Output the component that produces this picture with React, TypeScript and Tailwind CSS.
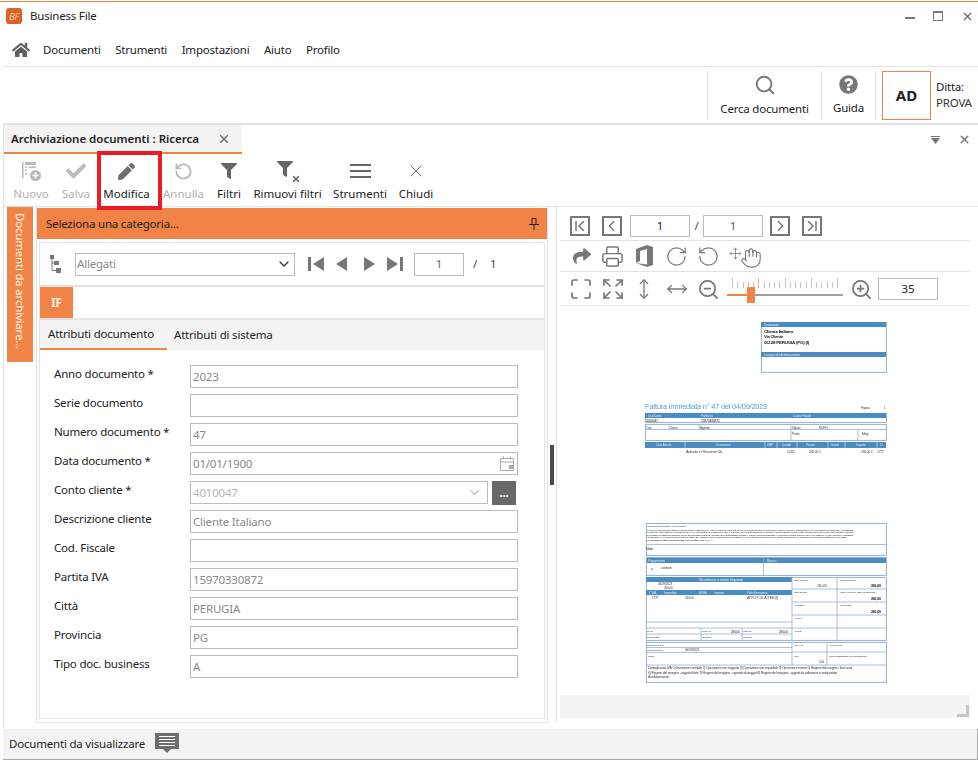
import { useState } from "react";
import { ChevronDown, Expand, Hand, Maximize, Move, MoveHorizontal, MoveVertical, Printer, RotateCcw, RotateCw, Search, X, ZoomIn, ZoomOut } from "lucide-react";
import { FaCheck, FaFilter, FaHome, FaPen, FaQuestionCircle, FaShare } from "react-icons/fa";

const font = "font-['Noto_Sans','Liberation_Sans',sans-serif]";

const fields = [
  { label: "Anno documento *", value: "2023" },
  { label: "Serie documento", value: "" },
  { label: "Numero documento *", value: "47" },
  { label: "Data documento *", value: "01/01/1900", kind: "date" },
  { label: "Conto cliente *", value: "4010047", kind: "combo" },
  { label: "Descrizione cliente", value: "Cliente Italiano" },
  { label: "Cod. Fiscale", value: "" },
  { label: "Partita IVA", value: "15970330872" },
  { label: "Città", value: "PERUGIA" },
  { label: "Provincia", value: "PG" },
  { label: "Tipo doc. business", value: "A" },
];

const line = "#8fb0d6";
const onBlue = "#d8e6f2";

const Blue = ({ x, y, w, h }: { x: number; y: number; w: number; h: number }) => <rect x={x} y={y} width={w} height={h} fill="#4a8bc2" />;
const Box = ({ x, y, w, h }: { x: number; y: number; w: number; h: number }) => <rect x={x + 0.4} y={y + 0.4} width={w} height={h} fill="none" stroke={line} strokeWidth="1" />;
const T = ({ x, y, s = 3.2, c = "#444", w, b, children }: { x: number; y: number; s?: number; c?: string; w?: number; b?: boolean; children: string }) => (
  <text x={x} y={y} fontSize={s} fill={c} fontWeight={b ? 700 : 400} textLength={w} lengthAdjust={w ? "spacingAndGlyphs" : undefined} fontFamily="Liberation Sans, sans-serif">{children}</text>
);

// anteprima della fattura
const DocPreview = () => (
  <svg viewBox="560 310 410 385" className="w-[410px] h-[385px] block mt-[4px] blur-[0.3px]">
    <Box x={761} y={322} w={125} h={50} />
    <Blue x={761} y={322} w={125} h={5} />
    <Blue x={761} y={352} w={125} h={5} />
    <T x={764} y={326} c={onBlue}>Destinatario</T>
    <T x={764} y={332.5} s={3.6} c="#111" b w={29}>Cliente Italiano</T>
    <T x={764} y={338} s={3.6} c="#111" b w={19}>Via Cliente</T>
    <T x={764} y={343.5} s={3.6} c="#222" b w={45}>06128 PERUGIA (PG) (I)</T>
    <T x={764} y={356} c={onBlue} w={36}>Luogo di destinazione</T>

    <T x={645} y={409} s={7} c="#5b9bd0" w={122}>Fattura immediata n° 47 del 04/09/2023</T>
    <T x={861} y={409} s={3}>Pagina:</T>
    <T x={884} y={409} s={3}>1</T>
    <Box x={645} y={413} w={241} h={9} />
    <Blue x={645} y={413} w={241} h={5} />
    <T x={648} y={417} c={onBlue}>Cod.Conto</T>
    <T x={701} y={417} c={onBlue}>Partita Iva</T>
    <T x={793} y={417} c={onBlue}>Codice Fiscale</T>
    <T x={646} y={421.5} s={3.4} c="#222">4010047</T>
    <T x={701} y={421.5} s={3.4} c="#222">15970330872</T>
    <Box x={645} y={424} w={241} h={16} />
    <path d="M645 429.500H886M791 424V440M699 424V429.500M669 424V429.500M858 429.500V440" stroke={line} strokeWidth="0.8" />
    <T x={646} y={428.5} s={3.4}>Cat.:</T>
    <T x={670} y={428.5} s={3.4}>Zona:</T>
    <T x={700} y={428.5} s={3.4}>Agente:</T>
    <T x={792} y={428.5} s={3.4}>Valuta:</T>
    <T x={819} y={428.5} s={3.4}>EURO</T>
    <T x={792} y={434.5} s={3.4}>Porto:</T>
    <T x={862} y={434.5} s={3.4}>Mag.:</T>
    <Blue x={645} y={442} w={241} h={6} />
    <path d="M685 442V448M765 442V448M777 442V448M797 442V448M828 442V448M845 442V448M877 442V448" stroke="#dce8f3" strokeWidth="0.6" />
    <T x={656} y={446.3} c={onBlue}>Cod. Articolo</T>
    <T x={716} y={446.3} c={onBlue}>Descrizione</T>
    <T x={767} y={446.3} s={2.8} c={onBlue}>UM/P</T>
    <T x={782} y={446.3} s={2.8} c={onBlue}>Quantità</T>
    <T x={806} y={446.3} c={onBlue}>Prezzo</T>
    <T x={831} y={446.3} c={onBlue}>Sconti</T>
    <T x={856} y={446.3} c={onBlue}>Importo</T>
    <T x={880} y={446.3} c={onBlue}>Ci</T>
    <T x={686} y={453} s={3.4} w={37}>Articolo in Reverse Ch.</T>
    <T x={787} y={453} s={3.4}>1,000</T>
    <T x={809} y={453} s={3.4}>260,00 €</T>
    <T x={861} y={453} s={3.4}>260,00 €</T>
    <T x={877} y={453} s={3.4}>1777</T>

    <Box x={646} y={523} w={240} h={32} />
    <path d="M646 544.500H886" stroke={line} strokeWidth="0.8" />
    <T x={647} y={527} s={2} w={40}>CONDIZIONI GENERALI DI VENDITA</T>
    <T x={647} y={530.5} s={2} w={206}>I prezzi applicati, salvo espressa pattuizione, sono quelli vigenti al momento della consegna della merce ordinata e le condizioni indicate in fattura</T>
    <T x={647} y={533} s={2} w={206}>Il cliente accetta le condizioni e le modalità di pagamento indicate; le contestazioni vanno presentate entro otto giorni dal ricevimento della merce</T>
    <T x={647} y={535.5} s={2} w={206}>in caso di ritardo sono dovuti gli interessi di mora previsti dalla legge; il foro competente è quello della sede del venditore e la merce viaggia</T>
    <T x={647} y={538} s={2} w={200}>a rischio e pericolo del committente anche se resa franco destino; eventuali reclami non sospendono il pagamento delle fatture emesse</T>
    <T x={647} y={540.5} s={2} w={65}>corrispettivi indicati al netto di IVA</T>
    <T x={646} y={549.5} s={3.6} c="#222">Note</T>

    <Blue x={646} y={557} w={240} h={6} />
    <Box x={646} y={557} w={240} h={18} />
    <path d="M763.500 557V575" stroke={line} strokeWidth="0.8" />
    <T x={648} y={561.5} s={3.6} c={onBlue}>Pagamento</T>
    <T x={767} y={561.5} s={3.6} c={onBlue}>Banca</T>
    <T x={651} y={570} s={3.4}>a</T>
    <T x={661} y={569} s={3.4}>contanti</T>

    <Box x={646} y={577} w={240} h={63} />
    <Blue x={646} y={577} w={146} h={5} />
    <T x={699} y={580.8} c={onBlue} w={44}>Scadenze e totale imposte</T>
    <T x={658} y={584.5} s={3.2}>04/09/2023</T>
    <T x={664} y={588.5} s={3.2}>260,00</T>
    <Blue x={646} y={590} w={146} h={5} />
    <T x={649} y={593.8} c={onBlue}>C.IVA</T>
    <T x={664} y={593.8} c={onBlue}>Imponibile</T>
    <T x={699} y={593.8} c={onBlue}>Al.IVA</T>
    <T x={714} y={593.8} c={onBlue}>Imposta</T>
    <T x={747} y={593.8} c={onBlue}>Titolo Esenzione</T>
    <T x={652} y={598.5} s={3.2}>1777</T>
    <T x={685} y={598.5} s={3.2}>260,00</T>
    <T x={747} y={598.5} s={3.2} w={31}>ART.17 C6. A-TER (I)</T>
    <path d="M792 577V640M837 577V640M792 589H886M792 602H886M792 615H886M792 628H886M646 622H792M646 628H792M646 634H792M701 628V640M742 628V640" stroke={line} strokeWidth="0.8" fill="none" />
    <T x={794} y={580.5} s={2.4}>Totale imponibile</T>
    <T x={817} y={587} s={3.6}>260,00</T>
    <T x={840} y={580.5} s={2.4}>Totale documento</T>
    <T x={871} y={587} s={3.6} c="#111" b>260,00</T>
    <T x={794} y={593} s={2.4}>Totale imposta</T>
    <T x={840} y={593} s={2.4} w={35}>Tot. Merce prima sconti</T>
    <T x={871} y={600} s={3.6} c="#111" b>260,00</T>
    <T x={794} y={606} s={2.4}>Altri Tot.Imp.</T>
    <T x={840} y={606} s={2.4}>Tot.a Pagare</T>
    <T x={871} y={612.5} s={3.6} c="#111" b>260,00</T>
    <T x={794} y={619} s={2.4}>Abbuoni</T>
    <T x={794} y={632} s={2.4}>Acconto</T>
    <T x={647} y={631.5} s={2.4}>Sc. Inc.</T>
    <T x={702} y={631.5} s={2.4}>Merce Inc.</T>
    <T x={731} y={632.5} s={3.2} c="#222">260,00</T>
    <T x={743} y={631.5} s={2.4}>Rates Inc.</T>
    <T x={779} y={632.5} s={3.2} c="#222">260,00</T>
    <T x={647} y={637.5} s={2.4}>Bolli/Omaggio</T>
    <T x={702} y={637.5} s={2.4}>Rimborso</T>
    <T x={743} y={637.5} s={2.4}>Spedizioni</T>

    <Box x={646} y={642} w={240} h={40} />
    <path d="M646 647.500H792M646 652.500H792M792 652H886M792 642V665M827 642V665M646 665H886" stroke={line} strokeWidth="0.8" />
    <T x={647} y={645.8} s={2.4}>Trasporto a cura di</T>
    <T x={647} y={651} s={2.4}>Data esportazione</T>
    <T x={685} y={651} s={3.2}>04/09/2023</T>
    <T x={647} y={656.5} s={2.4}>Allegato</T>
    <T x={794} y={645.8} s={2.4}>Cauz.Acc.</T>
    <T x={829} y={645.8} s={2.4}>Area ad esclus.</T>
    <T x={794} y={656.5} s={2.4}>Peso</T>
    <T x={829} y={656.5} s={2.4} w={38}>Firma destinatario per accettazione</T>
    <T x={819} y={663} s={3}>5,00</T>
    <T x={648} y={669} s={2.8} w={204}>Dettaglio esito IVA: 1) Inversione contabile  2) Operazione non soggetta  3) Operazione non imponibile  4) Operazione esente  5) Regime del margine - beni usati</T>
    <T x={648} y={673.5} s={2.8} w={189}>6) Regime del margine - oggetti d'arte  7) Regime del margine - agenzie di viaggio  8) Regime del margine - oggetti da collezione e antiquariato</T>
    <T x={648} y={678} s={2.8} w={21}>Autofatturazione</T>
  </svg>
);

const ToolBtn = ({ label, disabled, width, children }: { label: string; disabled?: boolean; width: string; children: React.ReactNode }) => (
  <div className={`flex flex-col items-center ${width}`}>
    <div className="h-[30px] flex items-center justify-center">{children}</div>
    <span className={`leading-[16px] whitespace-nowrap tracking-normal ${disabled ? "text-[#b0b0b0]" : "text-[#222]"}`}>{label}</span>
  </div>
);

const NavBox = ({ children }: { children: React.ReactNode }) => (
  <div className="w-5 h-5 border-2 border-[#777] flex items-center justify-center">{children}</div>
);

const RibbonDivider = () => <div className="w-px h-[48px] bg-[#e2e2e2]" />;

export default function App() {
  const [zoom] = useState(35);
  return (
    <div className={`relative w-[978px] h-[762px] bg-white overflow-hidden text-[11.500px] leading-[16px] tracking-[-0.2px] text-[#222] ${font}`}>
      <div className="h-px mt-px bg-[#ef8444]" />
      {/* barra titolo */}
      <div className="h-[30px] pb-[2px] flex items-center pl-[6px] pr-[4px]">
        <div className="w-4 h-4 rounded-[3px] bg-[#d9642a] flex items-center justify-center text-[9px] italic text-[#f6c9a8] leading-none">BF</div>
        <span className="ml-2">Business File</span>
        <div className="ml-auto flex items-center gap-[18px] text-[#6b6b6b]">
          <div className="w-[10px] h-[2px] bg-[#777] mt-[3px]" />
          <div className="w-[10px] h-[10px] border border-[#777] border-t-2" />
          <X size={13} strokeWidth={2.4} />
        </div>
      </div>
      {/* menu */}
      <div className="h-[33px] ml-[3px] pt-[1px] flex items-center border-b border-[#e2e2e2] box-content">
        <FaHome size={18} className="ml-[9px] text-[#5f5f5f]" />
        <div className="ml-[13px] flex gap-[14.500px]">
          <span>Documenti</span>
          <span>Strumenti</span>
          <span>Impostazioni</span>
          <span>Aiuto</span>
          <span>Profilo</span>
        </div>
      </div>
      {/* ribbon destro */}
      <div className="h-[56px] flex justify-end items-center pr-[2px] border-b-2 border-[#e2e2e2] box-content ml-[3px]">
        <RibbonDivider />
        <div className="w-[113px] flex flex-col items-center">
          <Search size={22} strokeWidth={2} className="text-[#777] mb-[5px]" />
          <span>Cerca documenti</span>
        </div>
        <RibbonDivider />
        <div className="w-[53px] flex flex-col items-center">
          <FaQuestionCircle size={19} className="text-[#777] mb-[6px]" />
          <span>Guida</span>
        </div>
        <RibbonDivider />
        <div className="ml-[6px] w-[49px] h-[49px] border border-[#ef8444] flex items-center justify-center font-bold text-[15px] tracking-normal">AD</div>
        <div className="w-[40px] ml-[5px]">
          <div>Ditta:</div>
          <div className="text-[#333]">PROVA</div>
        </div>
      </div>

      {/* area documento */}
      <div className="ml-[3px] h-[603px] border-l border-[#e2e2e2] flex flex-col">
        <div className="h-[29px] flex items-center pr-[7px]">
          <div className="w-[238px] h-[29px] bg-[#f3f3f3] border-b-2 border-[#ef8444] flex items-center pl-[7px] pr-[11px] justify-between">
            <span className="font-semibold whitespace-nowrap tracking-normal">Archiviazione documenti : Ricerca</span>
            <X size={14} strokeWidth={2} className="text-[#666]" />
          </div>
          <div className="ml-auto flex items-center gap-[18px] text-[#777]">
            <svg width="9" height="8" viewBox="0 0 9 8"><path d="M0 0H9V1H0ZM0 2H9L4.500 8Z" fill="#777" /></svg>
            <X size={13} strokeWidth={2.6} />
          </div>
        </div>
        {/* toolbar */}
        <div className="h-[52px] flex items-start pl-[9px] gap-[13px] pt-[2px]">
          <ToolBtn label="Nuovo" disabled width="w-[36px]">
            <svg width="22" height="22" viewBox="0 0 22 22">
              <path d="M2 2H3.500V18H2ZM5 2H16V5H5ZM5 6.500H7V8H5ZM5 9.500H7V11H5ZM5 13H7V14.500H5ZM8.500 6.500H16V8H8.500Z" fill="#b9b9b9" />
              <circle cx="15.500" cy="15.500" r="5.500" fill="#b9b9b9" />
              <path d="M15.500 12.500V18.500M12.500 15.500H18.500" stroke="#fff" strokeWidth="1.500" />
            </svg>
          </ToolBtn>
          <ToolBtn label="Salva" disabled width="w-[28px]"><FaCheck size={20} className="text-[#bcbcbc]" /></ToolBtn>
          <ToolBtn label="Modifica" width="w-[47px]"><FaPen size={17} className="text-[#6e6e6e]" /></ToolBtn>
          <ToolBtn label="Annulla" disabled width="w-[41px]"><RotateCcw size={19} strokeWidth={2.4} className="text-[#bcbcbc]" /></ToolBtn>
          <ToolBtn label="Filtri" width="w-[24px]"><FaFilter size={16} className="text-[#666]" /></ToolBtn>
          <ToolBtn label="Rimuovi filtri" width="w-[67px]">
            <div className="relative w-[22px] h-[20px]">
              <FaFilter size={16} className="text-[#666]" />
              <X size={10} strokeWidth={3.5} className="absolute right-[-2px] bottom-[-3px] text-[#666]" />
            </div>
          </ToolBtn>
          <ToolBtn label="Strumenti" width="w-[52px]">
            <div className="flex flex-col gap-[4px]">
              <div className="w-[21px] h-[2px] bg-[#666]" />
              <div className="w-[21px] h-[2px] bg-[#666]" />
              <div className="w-[21px] h-[2px] bg-[#666]" />
            </div>
          </ToolBtn>
          <ToolBtn label="Chiudi" width="w-[34px]"><X size={20} strokeWidth={1} className="text-[#555]" /></ToolBtn>
        </div>

        {/* corpo */}
        <div className="flex h-[522px] border-t border-[#e2e2e2]">
          <div className="w-[32px] pl-[3px] shrink-0">
            <div className="w-[26px] h-[155px] bg-[#f08345] text-[#fff3ea] [writing-mode:vertical-rl] pt-[6px] leading-[26px] whitespace-nowrap">
              Documenti da archiviare...
            </div>
          </div>
          {/* colonna sinistra */}
          <div className="w-[512px] h-[516px] shrink-0 border-l border-r border-b border-[#e2e2e2] flex flex-col">
            <div className="h-[31px] mt-px bg-[#f08345] flex items-center justify-between pl-[9px] pr-[8px] text-[#1f1f1f]">
              <span>Seleziona una categoria...</span>
              <svg width="10" height="12" viewBox="0 0 10 12"><path d="M3 .5H7V6.500H3ZM0 6.500H10M5 6.500V12" fill="none" stroke="#222" /></svg>
            </div>
            <div className="mx-[2px] mt-[3px] flex-1 mb-[3px] border border-[#e2e2e2] flex flex-col">
              <div className="h-[44px] border-b-2 border-[#e2e2e2] flex items-center">
                <svg width="12" height="18" viewBox="0 0 12 18" className="ml-[10px]">
                  <path d="M0 0H4V4H0ZM4 6H9V10H4ZM6 13H11V18H6Z" fill="#777" />
                  <path d="M2 4V15.500H6M2 8H4" fill="none" stroke="#777" />
                </svg>
                <div className="ml-[13px] w-[220px] h-[23px] border border-[#bbb] flex items-center justify-between pl-[1px] pr-[2px] text-[#888]">
                  <span>Allegati</span>
                  <ChevronDown size={16} strokeWidth={2} className="text-[#333]" />
                </div>
                <div className="ml-[13px] flex items-center gap-[12px]">
                  <svg width="16" height="14" viewBox="0 0 16 14"><path d="M0 0H3V14H0ZM16 0V14L5 7Z" fill="#777" /></svg>
                  <svg width="11" height="14" viewBox="0 0 11 14"><path d="M11 0V14L0 7Z" fill="#777" /></svg>
                  <svg width="11" height="14" viewBox="0 0 11 14" className="ml-[5px]"><path d="M0 0V14L11 7Z" fill="#777" /></svg>
                  <svg width="16" height="14" viewBox="0 0 16 14"><path d="M16 0H13V14H16ZM0 0V14L11 7Z" fill="#777" /></svg>
                </div>
                <div className="ml-[11px] w-[50px] h-[23px] border border-[#bbb] flex items-center justify-center text-[#666]">1</div>
                <span className="ml-[9px] text-[#444]">/</span>
                <span className="ml-[13px] text-[#444]">1</span>
              </div>
              <div className="h-[33px] border-b-2 border-[#e2e2e2]">
                <div className="w-[33px] h-[31px] bg-[#f08345] flex items-center justify-center font-bold text-[#fff3ea]">IF</div>
              </div>
              <div className="h-[30px] bg-[#f3f3f3] flex items-stretch">
                <div className="w-[127px] border-b-2 border-[#ef8444] pl-[8px] flex items-center">Attributi documento</div>
                <div className="pl-[7px] flex items-center">Attributi di sistema</div>
              </div>
              <div className="flex flex-col gap-[6px] pt-[15px] pl-[14px]">
                {fields.map((f) => (
                  <div key={f.label} className="flex items-start h-[23px]">
                    <span className="w-[136px] pt-[1px] text-[#222]">{f.label}</span>
                    {f.kind === "combo" ? (
                      <div className="flex gap-[4px]">
                        <div className="w-[298px] h-[23px] border border-[#bbb] flex items-center justify-between px-[2px] text-[#b5b5b5]">
                          <span>{f.value}</span>
                          <ChevronDown size={15} strokeWidth={2} className="text-[#bbb] mr-[3px]" />
                        </div>
                        <div className="w-6 h-6 bg-[#696969] text-white flex items-center justify-center font-bold leading-none">...</div>
                      </div>
                    ) : (
                      <div className="w-[328px] h-[23px] border border-[#bbb] flex items-center justify-between px-[2px] text-[#888]">
                        <span>{f.value}</span>
                        {f.kind === "date" && (
                          <svg width="14" height="15" viewBox="0 0 14 15" className="mr-[1px]">
                            <path d="M.5 2.500H13.500V14.500H.5ZM.5 6H13.500M3.500 .5V3M10.500 .5V3" fill="none" stroke="#aaa" />
                            <rect x="9" y="9" width="4" height="4" fill="#aaa" />
                          </svg>
                        )}
                      </div>
                    )}
                  </div>
                ))}
              </div>
            </div>
          </div>
          {/* splitter */}
          <div className="w-[8px] shrink-0 flex justify-center pt-[238px]">
            <div className="w-1 h-10 bg-[#4a4a4a]" />
          </div>
          {/* colonna destra */}
          <div className="w-[416px] h-[516px] border-l border-[#e2e2e2] pl-[3px]">
            <div className="h-[34px] pt-[4px] border-b border-[#e2e2e2] flex items-center pl-[10px] text-[#222] w-[410px]">
              <NavBox>
                <svg width="10" height="10" viewBox="0 0 10 10"><path d="M1 0V10M9 0L4 5L9 10" fill="none" stroke="#777" strokeWidth="1.500" /></svg>
              </NavBox>
              <div className="ml-[12px]">
                <NavBox>
                  <svg width="8" height="10" viewBox="0 0 8 10"><path d="M6 0L1.500 5L6 10" fill="none" stroke="#777" strokeWidth="1.500" /></svg>
                </NavBox>
              </div>
              <div className="ml-[8px] w-[60px] h-[22px] border border-[#bbb] flex items-center justify-center">1</div>
              <span className="w-[13px] text-center text-[#444]">/</span>
              <div className="w-[60px] h-[22px] border border-[#bbb] flex items-center justify-center text-[#555]">1</div>
              <div className="ml-[7px]">
                <NavBox>
                  <svg width="8" height="10" viewBox="0 0 8 10"><path d="M2 0L6.500 5L2 10" fill="none" stroke="#777" strokeWidth="1.500" /></svg>
                </NavBox>
              </div>
              <div className="ml-[12px]">
                <NavBox>
                  <svg width="10" height="10" viewBox="0 0 10 10"><path d="M9 0V10M1 0L6 5L1 10" fill="none" stroke="#777" strokeWidth="1.500" /></svg>
                </NavBox>
              </div>
            </div>
            <div className="h-[31px] border-b border-[#e2e2e2] flex items-center pl-[12px] w-[410px] text-[#777]">
              <FaShare size={18} className="ml-[1px] w-[18px]" />
              <Printer size={23} strokeWidth={1.5} className="ml-[10px]" />
              <svg width="17" height="22" viewBox="0 0 17 22" className="ml-[12px]">
                <path d="M0 4L11 0L17 2V20L11 22L0 18L11 19.500V4L4 6V16L0 18Z" fill="#777" />
              </svg>
              <RotateCw size={23} strokeWidth={1.3} className="ml-[12px]" />
              <RotateCcw size={23} strokeWidth={1.3} className="ml-[9px]" />
              <Move size={13} strokeWidth={1.4} className="ml-[9px] -mt-[6px]" />
              <Hand size={22} strokeWidth={1.2} className="-ml-[2px] mt-[3px]" />
            </div>
            <div className="h-[34px] pt-[1px] border-b border-[#e2e2e2] flex items-center pl-[12px] w-[410px] text-[#777]">
              <Maximize size={24} strokeWidth={1.7} className="-ml-[3px]" />
              <Expand size={24} strokeWidth={1.7} className="ml-[8px]" />
              <MoveVertical size={22} strokeWidth={1.4} className="ml-[8px]" />
              <MoveHorizontal size={22} strokeWidth={1.4} className="ml-[11px]" />
              <ZoomOut size={23} strokeWidth={1.8} className="ml-[9px]" />
              {/* slider zoom */}
              <div className="relative ml-[7px] w-[116px] h-[22px]">
                <div className="flex justify-between items-start h-[10px] px-[5px]">
                  {Array.from({ length: 21 }).map((_, i) => (
                    <div key={i} className={`w-px bg-[#c4c4c4] ${i % 5 === 0 ? "h-[10px]" : "h-[6px] mt-[4px]"}`} />
                  ))}
                </div>
                <div className="absolute left-0 right-0 top-[16px] h-[2px] bg-[#a0a0a0]" />
                <div className="absolute left-0 w-[21px] top-[16px] h-[2px] bg-[#ef8444]" />
                <div className="absolute left-[20px] top-[9px] w-[8px] h-[16px] bg-[#ef8444]" />
              </div>
              <ZoomIn size={23} strokeWidth={1.8} className="ml-[7px]" />
              <div className="ml-[5px] w-[60px] h-[22px] border border-[#bbb] flex items-center justify-center text-[#222]">{zoom}</div>
            </div>
            <DocPreview />
            <div className="h-[23px] w-[410px] bg-[#f3f3f3] flex items-end justify-end pr-[1px] pb-[1px]">
              <svg width="12" height="12" viewBox="0 0 12 12"><path d="M9 0H12V12H0V9H9Z" fill="#c8c8c8" /></svg>
            </div>
          </div>
        </div>
      </div>

      {/* barra inferiore */}
      <div className="mt-px ml-[3px] w-[975px] h-[31px] bg-[#f3f3f3] border-b border-r border-[#aaa] flex items-center pl-[6px] gap-[10px]">
        <span>Documenti da visualizzare</span>
        <svg width="24" height="22" viewBox="0 0 24 22">
          <path d="M0 0H24V16H16L12 20L8 16H0Z" fill="#6e6e6e" />
          <path d="M4 3.500H20M4 6.500H20M4 9.500H20M4 12.500H20" stroke="#fff" />
        </svg>
      </div>

      {/* evidenziazione */}
      <div className="absolute left-[97px] top-[151px] w-[65px] h-[59px] border-4 border-[#ed1c24] pointer-events-none" />
    </div>
  );
}
